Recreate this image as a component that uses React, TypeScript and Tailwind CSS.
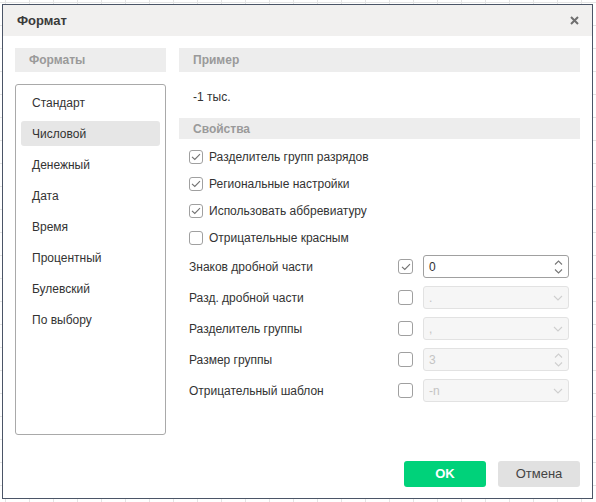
import React from "react";

const formats = [
  "Стандарт",
  "Числовой",
  "Денежный",
  "Дата",
  "Время",
  "Процентный",
  "Булевский",
  "По выбору",
];

const options = [
  { label: "Разделитель групп разрядов", checked: true },
  { label: "Региональные настройки", checked: true },
  { label: "Использовать аббревиатуру", checked: true },
  { label: "Отрицательные красным", checked: false },
];

type FieldKind = "spin" | "select";

const fields: { label: string; checked: boolean; value: string; kind: FieldKind }[] = [
  { label: "Знаков дробной части", checked: true, value: "0", kind: "spin" },
  { label: "Разд. дробной части", checked: false, value: ".", kind: "select" },
  { label: "Разделитель группы", checked: false, value: ",", kind: "select" },
  { label: "Размер группы", checked: false, value: "3", kind: "spin" },
  { label: "Отрицательный шаблон", checked: false, value: "-n", kind: "select" },
];

function CheckBox({ checked, size = 14 }: { checked: boolean; size?: number }) {
  return (
    <div
      className={`flex flex-none items-center justify-center rounded-[3px] border border-[#a0a0a0] bg-white ${
        size === 15 ? "h-[15px] w-[15px]" : "h-[14px] w-[14px]"
      }`}
    >
      {checked && (
        <svg width="10" height="8" viewBox="0 0 10 8" fill="none">
          <path d="M1 3.8 L3.8 6.5 L9 1.2" stroke="#707070" strokeWidth="1.1" />
        </svg>
      )}
    </div>
  );
}

function SpinArrows({ disabled }: { disabled: boolean }) {
  const c = disabled ? "#cfcfcf" : "#777";
  return (
    <svg width="9" height="16" viewBox="0 0 9 16" fill="none">
      <path d="M1 5.5 L4.5 2 L8 5.5" stroke={c} strokeWidth="1.1" />
      <path d="M1 10.5 L4.5 14 L8 10.5" stroke={c} strokeWidth="1.1" />
    </svg>
  );
}

function Chevron() {
  return (
    <svg width="10" height="6" viewBox="0 0 10 6" fill="none">
      <path d="M1 1 L5 5 L9 1" stroke="#cfcfcf" strokeWidth="1.1" />
    </svg>
  );
}

function Field({ value, kind, disabled }: { value: string; kind: FieldKind; disabled: boolean }) {
  return (
    <div
      className={`flex h-[23px] w-[146px] items-center justify-between rounded-[3px] border pl-[5px] pr-[5px] text-[12px] ${
        disabled
          ? "border-[#e2e2e2] bg-[#f6f6f6] text-[#c4c4c4]"
          : "border-[#a0a0a0] bg-white text-[#333]"
      }`}
    >
      <span>{value}</span>
      {kind === "spin" ? <SpinArrows disabled={disabled} /> : <Chevron />}
    </div>
  );
}

function SectionHeader({ title }: { title: string }) {
  return (
    <div className="flex h-[24px] items-center bg-[#ededed] pl-[14px] text-[12px] font-bold text-[#9a9a9a]">
      {title}
    </div>
  );
}

export default function App() {
  return (
    <div
      className="h-[502px] w-[596px] overflow-hidden bg-white bg-[linear-gradient(to_right,#e4e4e4_1px,transparent_1px),linear-gradient(to_bottom,#e4e4e4_1px,transparent_1px)] bg-[size:24px_23px] bg-[position:5px_2px] pl-[2px] pt-[4px]"
      style={{ fontFamily: '"Liberation Sans", Arial, sans-serif' }}
    >
      <div className="flex h-[495px] w-[591px] flex-col border border-[#4b5567] bg-white">
        {/* title */}
        <div className="flex h-[31px] flex-none items-center justify-between bg-[#f1f0ef] pl-[14px] pr-[13px]">
          <span className="text-[13px] font-bold text-[#3a3a3a]">Формат</span>
          <svg width="9" height="9" viewBox="0 0 9 9">
            <path d="M1 1 L8 8 M8 1 L1 8" stroke="#6f6f6f" strokeWidth="2" />
          </svg>
        </div>

        {/* body */}
        <div className="flex flex-1 gap-[13px] px-[12px] pt-[12px]">
          <div className="flex w-[151px] flex-col gap-[12px]">
            <SectionHeader title="Форматы" />
            <div className="flex h-[351px] flex-col gap-[6px] rounded-[3px] border border-[#a9a9a9] p-[5px]">
              {formats.map((f) => (
                <div
                  key={f}
                  className={`flex h-[25px] items-center rounded-[3px] pl-[11px] text-[12px] text-[#333] ${
                    f === "Числовой" ? "bg-[#e6e6e6]" : ""
                  }`}
                >
                  {f}
                </div>
              ))}
            </div>
          </div>

          <div className="flex w-[401px] flex-col">
            <SectionHeader title="Пример" />
            <div className="flex h-[46px] items-center pl-[14px] pt-[4px] text-[12px] text-[#333]">-1 тыс.</div>
            <div className="flex h-[21px] items-center bg-[#ededed] pl-[14px] text-[12px] font-bold text-[#9a9a9a]">
              Свойства
            </div>
            <div className="flex flex-col gap-[13px] pl-[10px] pt-[11px]">
              {options.map((o) => (
                <div key={o.label} className="flex h-[14px] items-center gap-[6px] text-[12px] text-[#333]">
                  <CheckBox checked={o.checked} />
                  <span>{o.label}</span>
                </div>
              ))}
            </div>
            <div className="flex flex-col gap-[8px] pt-[10px]">
              {fields.map((f) => (
                <div key={f.label} className="flex h-[23px] items-center text-[12px] text-[#333]">
                  <span className="w-[219px] flex-none pl-[10px]">{f.label}</span>
                  <CheckBox checked={f.checked} size={15} />
                  <div className="ml-[10px]">
                    <Field value={f.value} kind={f.kind} disabled={!f.checked} />
                  </div>
                </div>
              ))}
            </div>
          </div>
        </div>

        {/* footer */}
        <div className="flex flex-none justify-end gap-[12px] pb-[11px] pr-[12px]">
          <button className="h-[26px] w-[82px] rounded-[3px] bg-[#00d27a] text-[13px] font-bold text-white">OK</button>
          <button className="h-[26px] w-[82px] rounded-[3px] bg-[#e1e1e1] text-[13px] text-[#444]">Отмена</button>
        </div>
      </div>
    </div>
  );
}
